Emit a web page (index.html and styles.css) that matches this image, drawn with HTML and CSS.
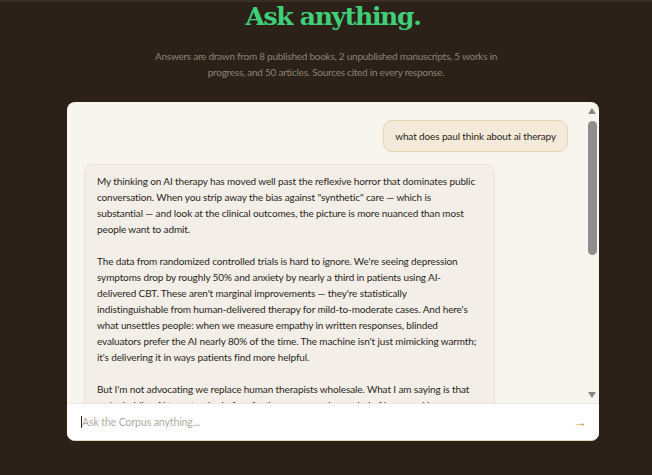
FILE: index.html
```html
<!DOCTYPE html>
<html lang="en">
<head>
<meta charset="utf-8">
<title>Ask anything.</title>
<link rel="stylesheet" href="styles.css">
</head>
<body>
<div class="page">
  <h1 class="title">Ask anything.</h1>
  <p class="subtitle">Answers are drawn from 8 published books, 2 unpublished manuscripts, 5 works in progress, and 50 articles. Sources cited in every response.</p>
  <div class="chat">
    <div class="thread">
      <div class="messages">
        <div class="msg user">what does paul think about ai therapy</div>
        <div class="msg bot">
          <p>My thinking on AI therapy has moved well past the reflexive horror that dominates public<br>conversation. When you strip away the bias against "synthetic" care — which is<br>substantial — and look at the clinical outcomes, the picture is more nuanced than most<br>people want to admit.</p>
          <p>The data from randomized controlled trials is hard to ignore. We're seeing depression<br>symptoms drop by roughly 50% and anxiety by nearly a third in patients using AI-<br>delivered CBT. These aren't marginal improvements — they're statistically<br>indistinguishable from human-delivered therapy for mild-to-moderate cases. And here's<br>what unsettles people: when we measure empathy in written responses, blinded<br>evaluators prefer the AI nearly 80% of the time. The machine isn't just mimicking warmth;<br>it's delivering it in ways patients find more helpful.</p>
          <p>But I'm not advocating we replace human therapists wholesale. What I am saying is that<br>we're holding AI to a standard of perfection we never demanded of humans. Human<br>therapists vary enormously in skill, availability and cost, and many people who need<br>help never get it at all.</p>
        </div>
      </div>
      <div class="scrollbar" aria-hidden="true">
        <span class="arrow up"></span>
        <div class="track"><span class="thumb"></span></div>
        <span class="arrow down"></span>
      </div>
    </div>
    <form class="composer">
      <span class="caret"></span>
      <input class="ask" type="text" placeholder="Ask the Corpus anything...">
      <button class="send" type="button" aria-label="Send">→</button>
    </form>
  </div>
</div>
</body>
</html>
```

FILE: styles.css
```css
html, body {
  margin: 0;
  padding: 0;
}
body {
  background: #2c2118;
  border-top: 2px solid #3a2d21;
  font-family: Lato, "Liberation Sans", sans-serif;
}
.page {
  width: 532px;
  margin: 0 auto;
  padding-left: 14px;
  text-align: center;
}
.title {
  margin: 0;
  font-family: "DejaVu Serif", serif;
  font-weight: bold;
  font-size: 25px;
  letter-spacing: -1.3px;
  line-height: 30px;
  color: #3fcf78;
}
.subtitle {
  margin: 16px auto 0;
  width: 370px;
  padding-right: 14px;
  font-size: 10px;
  letter-spacing: -0.25px;
  line-height: 16px;
  color: #8c8174;
}
.chat {
  margin-top: 22px;
  height: 339px;
  background: #f8f5ef;
  border-radius: 8px;
  border-bottom: 1px solid #e4d6b6;
  box-sizing: border-box;
  display: flex;
  flex-direction: column;
  overflow: hidden;
  text-align: left;
}
.thread {
  flex: 1;
  min-height: 0;
  display: flex;
}
.messages {
  flex: 1;
  min-width: 0;
  overflow: hidden;
  padding: 18px 16px 0 17px;
  display: flex;
  flex-direction: column;
  gap: 12px;
}
.scrollbar {
  width: 15px;
  flex: none;
  display: flex;
  flex-direction: column;
  align-items: center;
  padding: 6px 0 5px;
  box-sizing: border-box;
}
.arrow {
  width: 0;
  height: 0;
  border-left: 4.5px solid transparent;
  border-right: 4.5px solid transparent;
}
.arrow.up {
  border-bottom: 6px solid #878787;
}
.arrow.down {
  border-top: 6px solid #878787;
}
.track {
  flex: 1;
  width: 9px;
  padding-top: 7px;
  margin-left: 2px;
}
.thumb {
  display: block;
  width: 9px;
  height: 134px;
  border-radius: 5px;
  background: #8d8d8d;
}
.msg {
  font-size: 10px;
  letter-spacing: -0.12px;
  line-height: 16px;
  color: #2a2520;
  border-radius: 9px;
  box-sizing: border-box;
}
.user {
  align-self: flex-end;
  background: #f3ead9;
  border: 1px solid #e5d5b2;
  padding: 7px 11px;
}
.bot {
  align-self: flex-start;
  width: 411px;
  background: #f3efe8;
  border: 1px solid #e6e0d5;
  padding: 8px 12px;
  white-space: nowrap;
}
.bot p {
  margin: 0 0 16px;
}
.composer {
  margin: 0;
  height: 37px;
  flex: none;
  background: #ffffff;
  border-top: 1px solid #ece7de;
  display: flex;
  align-items: center;
  padding: 0 12px 0 14px;
  box-sizing: border-box;
}
.caret {
  width: 1px;
  height: 12px;
  background: #2a2520;
  flex: none;
}
.ask {
  flex: 1;
  border: none;
  outline: none;
  background: transparent;
  font-family: Lato, "Liberation Sans", sans-serif;
  font-size: 10.5px;
  letter-spacing: -0.1px;
  color: #2a2520;
  padding: 0;
}
.ask::placeholder {
  color: #b0aaa2;
}
.send {
  border: none;
  background: transparent;
  color: #c9a03a;
  font-size: 14px;
  padding: 0;
  cursor: pointer;
}
```
